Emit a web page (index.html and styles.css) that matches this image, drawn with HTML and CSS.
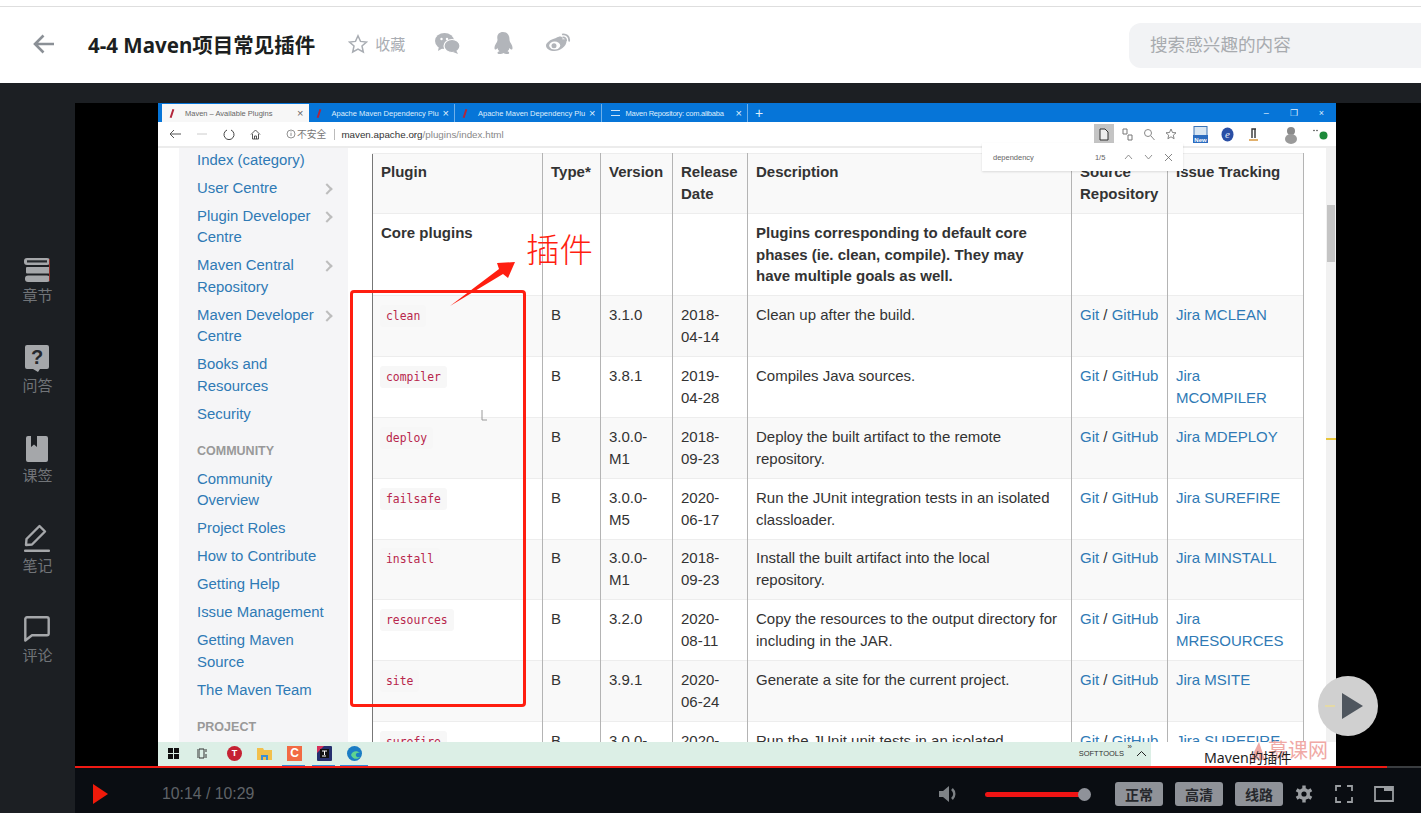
FILE: index.html
```html
<!DOCTYPE html>
<html lang="zh-CN">
<head>
    <meta charset="UTF-8">
    <meta name="viewport" content="width=device-width, initial-scale=1.0">
    <title>4-4 Maven项目常见插件</title>
    <link rel="stylesheet" href="styles.css">
</head>
<body>
    <header class="page-header">
        <div class="header-left">
            <svg class="back-icon" width="22" height="20" viewBox="0 0 22 20"><path d="M21 10H2M10.500 1.500L2 10l8.500 8.500" fill="none" stroke="#8b9096" stroke-width="2.600"/></svg>
            <h1 class="lesson-title">4-4 Maven项目常见插件</h1>
            <div class="collect">
                <svg width="20" height="20" viewBox="0 0 20 20"><path d="M10 1.800l2.500 5.600 6 .6-4.500 4 1.300 6L10 15l-5.300 3 1.300-6-4.500-4 6-.6z" fill="none" stroke="#a9adb3" stroke-width="1.500"/></svg>
                <span>收藏</span>
            </div>
            <div class="share-icons">
                <svg width="25" height="21" viewBox="0 0 25 21"><ellipse cx="9.500" cy="8" rx="9.500" ry="8" fill="#b2b5ba"/><path d="M4 13l-1 5 5-3z" fill="#b2b5ba"/><ellipse cx="17" cy="13" rx="8" ry="6.500" fill="#b2b5ba" stroke="#fff" stroke-width="1.200"/><path d="M21 17l2 4-5-2z" fill="#b2b5ba"/><circle cx="6.500" cy="6" r="1.200" fill="#fff"/><circle cx="12" cy="6" r="1.200" fill="#fff"/></svg>
                <svg width="20" height="23" viewBox="0 0 20 23"><path d="M10 0c4.500 0 6.500 3.500 6.500 7.500 0 1.500.5 2.500 1.500 4 1.500 2.500 2 5 1 6-.5.400-1.500-.3-2.500-1.500-.3 1.500-1 2.500-2 3.200 1.500.5 2 1.300 1.500 2.200-.8 1.200-4 .8-5.500-.4-1.500 1.200-5 1.600-5.800.4-.5-.9 0-1.700 1.800-2.200-1-.7-1.800-1.700-2-3.200-1 1.200-2 1.900-2.500 1.500-1-1 -.5-3.500 1-6 1-1.500 1.500-2.500 1.500-4C3.500 3.500 5.500 0 10 0z" fill="#b2b5ba"/></svg>
                <svg width="25" height="21" viewBox="0 0 25 21"><path d="M10 5c3-2 6-2 6.500 0 .2.800 0 1.500 0 1.500 2-.6 4-.3 4 1.700 0 5-6.500 9.800-12 9.800C4 18 0 16 0 12.500 0 10 4 6.500 10 5z" fill="#b2b5ba"/><ellipse cx="8.700" cy="12.500" rx="5.500" ry="4" fill="#fff"/><circle cx="8" cy="12.700" r="2.500" fill="#b2b5ba"/><path d="M16 1.500c4-1 8 2 7 7M16.500 4.500c2-.5 4 1 3.500 3.500" fill="none" stroke="#b2b5ba" stroke-width="1.800"/></svg>
            </div>
        </div>
        <div class="search-box">搜索感兴趣的内容</div>
    </header>

    <main class="player">
        <nav class="side-tools">
            <a class="tool-item">
                <svg width="26" height="24" viewBox="0 0 26 24"><rect x="0" y="0" width="26" height="7" rx="3" fill="#a5a7aa"/><rect x="3" y="2.300" width="20" height="2.200" fill="#25282c"/><rect x="2" y="9" width="24" height="6.500" rx="1" fill="#a5a7aa"/><rect x="1" y="17.500" width="25" height="6.500" rx="3" fill="#a5a7aa"/><path d="M25.500 1v22" stroke="#8e2b25" stroke-width="1"/></svg>
                <span>章节</span>
            </a>
            <a class="tool-item">
                <svg width="24" height="27" viewBox="0 0 24 27"><path d="M2 0h20a2 2 0 0 1 2 2v20a2 2 0 0 1-2 2h-7l-2 3-5-3H2a2 2 0 0 1-2-2V2a2 2 0 0 1 2-2z" fill="#a5a7aa"/><text x="12" y="19" class="tool-mark">?</text></svg>
                <span>问答</span>
            </a>
            <a class="tool-item">
                <svg width="22" height="26" viewBox="0 0 22 26"><path d="M2 0h3v11l3-2.500 3 2.500V0h9a2 2 0 0 1 2 2v22a2 2 0 0 1-2 2H2a2 2 0 0 1-2-2V2a2 2 0 0 1 2-2z" fill="#a5a7aa"/></svg>
                <span>课签</span>
            </a>
            <a class="tool-item">
                <svg width="26" height="28" viewBox="0 0 26 28"><path d="M2 21l.5-6L15.500 2l5.500 5.500L8 20.500z" fill="none" stroke="#a5a7aa" stroke-width="2.400" stroke-linejoin="round"/><rect x="0" y="25.500" width="26" height="2.500" rx="1" fill="#a5a7aa"/></svg>
                <span>笔记</span>
            </a>
            <a class="tool-item">
                <svg width="26" height="26" viewBox="0 0 26 26"><path d="M3 1.300h20a1.700 1.700 0 0 1 1.700 1.700v14.500a1.700 1.700 0 0 1-1.700 1.700H8l-6.700 5.300V3A1.700 1.700 0 0 1 3 1.300z" fill="none" stroke="#a5a7aa" stroke-width="2.400" stroke-linejoin="round"/></svg>
                <span>评论</span>
            </a>
        </nav>

        <section class="stage">
            <div class="video-area">
                <div class="shot">
                    <div class="tab-bar">
                        <div class="tab tab-active">
                            <i class="tab-logo"></i><span>Maven – Available Plugins</span><b>×</b>
                        </div>
                        <div class="tab">
                            <i class="tab-logo"></i><span>Apache Maven Dependency Plu</span><b>×</b>
                        </div>
                        <div class="tab">
                            <i class="tab-logo"></i><span>Apache Maven Dependency Plu</span><b>×</b>
                        </div>
                        <div class="tab">
                            <i class="tab-lines"></i><span class="tab-tight">Maven Repository: com.alibaba</span><b>×</b>
                        </div>
                        <div class="tab-plus">+</div>
                        <div class="win-buttons">
                            <span>–</span><span>❐</span><span>×</span>
                        </div>
                    </div>

                    <div class="url-bar">
                        <div class="nav-buttons">
                            <svg width="12" height="10" viewBox="0 0 12 10"><path d="M12 5H1M5 1L1 5l4 4" fill="none" stroke="#555" stroke-width="1"/></svg>
                            <svg width="12" height="10" viewBox="0 0 12 10"><path d="M1 5h10" stroke="#ccc" stroke-width="1"/></svg>
                            <svg width="12" height="12" viewBox="0 0 12 12"><path d="M4 2a5 5 0 1 0 4 0" fill="none" stroke="#444" stroke-width="1"/></svg>
                            <svg width="11" height="11" viewBox="0 0 11 11"><path d="M1 5.500L5.500 1 10 5.500M2.500 5v5h6V5M4.500 10V7h2v3" fill="none" stroke="#444" stroke-width=".9"/></svg>
                        </div>
                        <div class="address">
                            <svg width="10" height="10" viewBox="0 0 10 10"><circle cx="5" cy="5" r="4" fill="none" stroke="#777" stroke-width=".8"/><path d="M5 4v3M5 2.500v.8" stroke="#777" stroke-width=".8"/></svg>
                            <span class="not-safe">不安全</span>
                            <span class="url-text"><b>maven.apache.org</b>/plugins/index.html</span>
                        </div>
                        <div class="toolbar-icons">
                            <span class="reader-btn"><svg width="10" height="13" viewBox="0 0 10 13"><path d="M1 1h5l3 3v8H1z" fill="#eee" stroke="#333"/></svg></span>
                            <svg width="11" height="13" viewBox="0 0 11 13"><path d="M1 1h4v5H1zM6 7h4v5H6z" fill="none" stroke="#777"/></svg>
                            <svg width="12" height="13" viewBox="0 0 12 13"><circle cx="5" cy="5" r="3.500" fill="none" stroke="#888"/><path d="M8 8l3.500 4" stroke="#888"/></svg>
                            <svg width="12" height="12" viewBox="0 0 12 12"><path d="M6 1l1.500 3.500 3.500.3-2.700 2.400.8 3.500L6 8.800l-3.100 1.900.8-3.500L1 4.800l3.500-.3z" fill="none" stroke="#666" stroke-width=".8"/></svg>
                            <svg width="15" height="17" viewBox="0 0 15 17"><rect x="1" y=".5" width="13" height="9" fill="#d8e6f2" stroke="#3a74b8"/><rect x="0" y="9" width="15" height="8" fill="#2b6cc0"/><text x="7.500" y="15.500" class="news-mark">New</text></svg>
                            <svg width="13" height="15" viewBox="0 0 13 15"><ellipse cx="6.500" cy="7.500" rx="6" ry="7" fill="#2a4fa5"/><text x="6.500" y="11" class="edge-mark">e</text></svg>
                            <svg width="9" height="13" viewBox="0 0 9 13"><path d="M3 10V1h4M6 1v9" fill="none" stroke="#333" stroke-width="1.400"/><path d="M0 12h9" stroke="#d9973d" stroke-width="1.500"/></svg>
                            <svg width="12" height="19" viewBox="0 0 12 19"><circle cx="6" cy="6" r="4" fill="#8a8a8a"/><ellipse cx="6" cy="14" rx="6" ry="5" fill="#9a9a9a"/></svg>
                            <svg width="16" height="11" viewBox="0 0 16 11"><circle cx="2" cy="1.500" r=".8" fill="#444"/><circle cx="5" cy="1.500" r=".8" fill="#444"/><circle cx="11.500" cy="6.500" r="4" fill="#1c8a3a"/></svg>
                        </div>
                    </div>

                    <div class="site">
                        <div class="site-gutter"></div>
                        <ul class="site-nav">
                            <li><a>Index (category)</a></li>
                            <li class="has-sub"><a>User Centre</a></li>
                            <li class="has-sub"><a>Plugin Developer Centre</a></li>
                            <li class="has-sub"><a>Maven Central Repository</a></li>
                            <li class="has-sub"><a>Maven Developer Centre</a></li>
                            <li><a>Books and Resources</a></li>
                            <li><a>Security</a></li>
                            <li class="nav-head">COMMUNITY</li>
                            <li><a>Community Overview</a></li>
                            <li><a>Project Roles</a></li>
                            <li><a>How to Contribute</a></li>
                            <li><a>Getting Help</a></li>
                            <li><a>Issue Management</a></li>
                            <li><a>Getting Maven Source</a></li>
                            <li><a>The Maven Team</a></li>
                            <li class="nav-head">PROJECT</li>
                        </ul>
                        <div class="site-main">
                            <table class="plugin-table">
                                <colgroup>
                                    <col class="col-plugin"><col class="col-type"><col class="col-version"><col class="col-date"><col class="col-desc"><col class="col-source"><col class="col-issue">
                                </colgroup>
                                <tr class="row-head">
                                    <th>Plugin</th><th>Type*</th><th>Version</th><th>Release Date</th><th>Description</th><th>Source Repository</th><th>Issue Tracking</th>
                                </tr>
                                <tr class="row-core">
                                    <td><b>Core plugins</b></td><td></td><td></td><td></td>
                                    <td><b>Plugins corresponding to default core phases (ie. clean, compile). They may have multiple goals as well.</b></td><td></td><td></td>
                                </tr>
                                <tr class="row-alt">
                                    <td><code>clean</code></td><td>B</td><td>3.1.0</td><td>2018-04-14</td><td>Clean up after the build.</td><td><a>Git</a> / <a>GitHub</a></td><td><a>Jira MCLEAN</a></td>
                                </tr>
                                <tr>
                                    <td><code>compiler</code></td><td>B</td><td>3.8.1</td><td>2019-04-28</td><td>Compiles Java sources.</td><td><a>Git</a> / <a>GitHub</a></td><td><a>Jira MCOMPILER</a></td>
                                </tr>
                                <tr class="row-alt">
                                    <td><code>deploy</code></td><td>B</td><td>3.0.0-M1</td><td>2018-09-23</td><td>Deploy the built artifact to the remote repository.</td><td><a>Git</a> / <a>GitHub</a></td><td><a>Jira MDEPLOY</a></td>
                                </tr>
                                <tr>
                                    <td><code>failsafe</code></td><td>B</td><td>3.0.0-M5</td><td>2020-06-17</td><td>Run the JUnit integration tests in an isolated classloader.</td><td><a>Git</a> / <a>GitHub</a></td><td><a>Jira SUREFIRE</a></td>
                                </tr>
                                <tr class="row-alt row-short">
                                    <td><code>install</code></td><td>B</td><td>3.0.0-M1</td><td>2018-09-23</td><td>Install the built artifact into the local repository.</td><td><a>Git</a> / <a>GitHub</a></td><td><a>Jira MINSTALL</a></td>
                                </tr>
                                <tr>
                                    <td><code>resources</code></td><td>B</td><td>3.2.0</td><td>2020-08-11</td><td>Copy the resources to the output directory for including in the JAR.</td><td><a>Git</a> / <a>GitHub</a></td><td><a>Jira MRESOURCES</a></td>
                                </tr>
                                <tr class="row-alt">
                                    <td><code>site</code></td><td>B</td><td>3.9.1</td><td>2020-06-24</td><td>Generate a site for the current project.</td><td><a>Git</a> / <a>GitHub</a></td><td><a>Jira MSITE</a></td>
                                </tr>
                                <tr>
                                    <td><code>surefire</code></td><td>B</td><td>3.0.0-M5</td><td>2020-06-17</td><td>Run the JUnit unit tests in an isolated classloader.</td><td><a>Git</a> / <a>GitHub</a></td><td><a>Jira SUREFIRE</a></td>
                                </tr>
                            </table>
                        </div>
                        <div class="scroll-track"><i class="scroll-thumb"></i></div>
                    </div>

                    <div class="bottom-row">
                        <div class="taskbar">
                            <div class="task-icons">
                                <svg width="11" height="11" viewBox="0 0 11 11"><path d="M0 0h5v5H0zM6 0h5v5H6zM0 6h5v5H0zM6 6h5v5H6z" fill="#111"/></svg>
                                <svg width="11" height="11" viewBox="0 0 11 11"><path d="M2 1h5v9H2zM0 1v9M9 1v3M9 6v4" fill="none" stroke="#333"/></svg>
                                <span class="task-t">T</span>
                                <svg width="15" height="13" viewBox="0 0 15 13"><path d="M0 1h6l1 2h8v10H0z" fill="#f2c04c"/><path d="M4 8h7v5H9v-3H6v3H4z" fill="#3d8fd6"/></svg>
                                <span class="task-c">C</span>
                                <svg width="15" height="15" viewBox="0 0 15 15"><rect width="15" height="15" rx="1" fill="#26306e"/><path d="M0 0h7L0 7z" fill="#d8315b"/><path d="M3 3h9v9H3z" fill="#111"/><path d="M5 5h5M7.500 5v4M5 10h4" stroke="#fff"/></svg>
                                <svg width="15" height="15" viewBox="0 0 15 15"><circle cx="7.500" cy="7.500" r="7.500" fill="#1b7dc4"/><path d="M4 9c1-4 6-5 9-2-2-1-5 0-4 3 1 1.500 3 1.500 4 .8-2 3-7 3-9-1.800z" fill="#5fd38f"/></svg>
                            </div>
                            <div class="task-tray">
                                <span>SOFTTOOLS</span>
                                <i class="tray-more">»</i>
                                <svg width="11" height="7" viewBox="0 0 11 7"><path d="M1 6l4.500-4.500L10 6" fill="none" stroke="#222" stroke-width="1"/></svg>
                            </div>
                        </div>
                        <div class="caption">Maven的插件</div>
                    </div>

                    <!-- things drawn over the recording -->
                    <div class="find-bar">
                        <span class="find-word">dependency</span>
                        <span class="find-count">1/5</span>
                        <span class="find-btns">
                            <svg width="9" height="6" viewBox="0 0 9 6"><path d="M1 5l3.500-4L8 5" fill="none" stroke="#777" stroke-width=".8"/></svg>
                            <svg width="9" height="6" viewBox="0 0 9 6"><path d="M1 1l3.500 4L8 1" fill="none" stroke="#777" stroke-width=".8"/></svg>
                            <svg width="9" height="9" viewBox="0 0 9 9"><path d="M1 1l7 7M8 1L1 8" stroke="#666" stroke-width=".8"/></svg>
                        </span>
                    </div>
                    <div class="red-box"></div>
                    <svg class="red-arrow" width="70" height="48" viewBox="0 0 70 48"><path d="M1 46L50 9 48 3 66 2 59 18 54 14z" fill="#ff1e10"/></svg>
                    <div class="red-label">插件</div>
                    <svg class="mouse-mark" width="8" height="13" viewBox="0 0 8 13"><path d="M1 1v10h5" fill="none" stroke="#9a9a9a" stroke-width="1"/></svg>
                    <div class="watermark">
                        <svg width="15" height="18" viewBox="0 0 15 18"><path d="M9 0l6 18H8l1-6-3 6H0z" fill="#f0a9a5"/></svg>
                        <span>慕课网</span>
                    </div>
                </div>
                <div class="big-play"><i></i></div>
            </div>

            <div class="progress"><i></i></div>

            <div class="controls">
                <i class="play-btn"></i>
                <span class="time">10:14 / 10:29</span>
                <svg class="volume-icon" width="19" height="18" viewBox="0 0 19 18"><path d="M0 6h4l6-5v16l-6-5H0z" fill="#7e8286"/><path d="M13 4c3 3 3 7 0 10" fill="none" stroke="#7e8286" stroke-width="2.500"/></svg>
                <div class="volume-bar"><i></i></div>
                <div class="ctrl-btn">正常</div>
                <div class="ctrl-btn">高清</div>
                <div class="ctrl-btn">线路</div>
                <svg class="gear-icon" width="18" height="18" viewBox="0 0 18 18"><path d="M9 .5v17M1.600 4.750l14.800 8.500M1.600 13.250l14.800-8.500" stroke="#9a9da1" stroke-width="3.400"/><circle cx="9" cy="9" r="6" fill="#9a9da1"/><circle cx="9" cy="9" r="2.600" fill="#0a0d12"/></svg>
                <svg class="full-icon" width="18" height="18" viewBox="0 0 18 18"><path d="M1 6V1h5M12 1h5v5M17 12v5h-5M6 17H1v-5" fill="none" stroke="#9a9da1" stroke-width="1.800"/></svg>
                <svg class="pip-icon" width="20" height="16" viewBox="0 0 20 16"><path d="M1 1h18v14H1z" fill="none" stroke="#9a9da1" stroke-width="1.800"/><path d="M10 1h9v4h-9z" fill="#9a9da1"/></svg>
            </div>
        </section>
    </main>
</body>
</html>
```

FILE: styles.css
```css
* {
    box-sizing: border-box;
}

body {
    margin: 0;
    height: 813px;
    overflow: hidden;
    background-color: #fff;
    font-family: "Liberation Sans", "Noto Sans CJK SC", sans-serif;
}

/* top header */
.page-header {
    height: 83px;
    display: flex;
    justify-content: space-between;
    align-items: center;
    padding: 7px 0 0 33px;
    background: linear-gradient(#fff 6px, #dedede 6px, #dedede 7px, #fff 7px);
}

.header-left {
    display: flex;
    align-items: center;
    margin-top: -3px;
}

.back-icon {
    display: block;
}

.lesson-title {
    margin: 0 0 0 33px;
    font-family: "Noto Sans", "Noto Sans CJK SC", sans-serif;
    font-size: 20.500px;
    font-weight: bold;
    color: #1c1f21;
}

.collect {
    display: flex;
    align-items: center;
    margin-left: 33px;
    gap: 7px;
    font-size: 15px;
    font-family: "Noto Sans CJK SC", sans-serif;
    color: #a9adb3;
}

.share-icons {
    display: flex;
    align-items: center;
    margin-left: 30px;
    gap: 33px;
}

.search-box {
    width: 292px;
    height: 45px;
    padding-left: 21px;
    line-height: 42px;
    background-color: #f2f3f5;
    border-radius: 12px 0 0 12px;
    font-family: "Noto Sans CJK SC", sans-serif;
    font-size: 17.600px;
    color: #a8abaf;
}

/* player */
.player {
    height: 730px;
    display: flex;
    background-color: #1c1f23;
}

.side-tools {
    width: 75px;
    flex-shrink: 0;
    padding-top: 161px;
    display: flex;
    flex-direction: column;
    align-items: center;
    gap: 29px;
}

.tool-item {
    height: 61px;
    display: flex;
    flex-direction: column;
    align-items: center;
    justify-content: flex-end;
    gap: 3px;
    font-family: "Noto Sans CJK SC", sans-serif;
    font-size: 15px;
    line-height: 20px;
    color: #717478;
}

.tool-mark {
    font-family: "Liberation Sans", sans-serif;
    font-size: 20px;
    font-weight: bold;
    text-anchor: middle;
    fill: #25282c;
}

.stage {
    flex: 1;
    display: flex;
    flex-direction: column;
}

.video-area {
    position: relative;
    height: 683px;
    padding: 20px 85px 0 83px;
    background: linear-gradient(#1c1f23 20px, #000 20px);
}

.shot {
    position: relative;
    height: 100%;
    display: flex;
    flex-direction: column;
    overflow: hidden;
    background-color: #fff;
}

/* recorded browser */
.tab-bar {
    height: 19px;
    flex-shrink: 0;
    display: flex;
    align-items: flex-end;
    padding-left: 4px;
    background-color: #0675d8;
    color: #dfeefc;
    font-size: 7.500px;
}

.tab {
    width: 146.500px;
    height: 18px;
    display: flex;
    align-items: center;
    padding: 0 5px 0 9px;
    border-right: 1px solid #6fb0ea;
    white-space: nowrap;
}

.tab b {
    margin-left: auto;
    font-weight: normal;
    font-size: 11px;
}

.tab-active {
    background-color: #f7f7f7;
    color: #666;
    border-right: 0;
}

.tab-logo {
    width: 2px;
    height: 9px;
    margin-right: 12px;
    background-color: #b3263b;
    transform: rotate(18deg);
}

.tab-lines {
    width: 9px;
    height: 6px;
    margin-right: 6px;
    border-top: 1px solid #cfe4f8;
    border-bottom: 1px solid #cfe4f8;
}

.tab-tight {
    letter-spacing: -.24px;
}

.tab-plus {
    margin: 0 0 1px 7px;
    font-size: 14px;
    line-height: 16px;
    color: #dfeefc;
}

.win-buttons {
    display: flex;
    margin-left: auto;
    margin-right: 12px;
    gap: 21px;
    height: 18px;
    align-items: center;
    font-size: 9px;
}

.url-bar {
    height: 26px;
    flex-shrink: 0;
    display: flex;
    align-items: center;
    padding: 0 8px 0 11px;
    background-color: #fff;
    border-bottom: 2px solid #ececec;
}

.nav-buttons {
    display: flex;
    align-items: center;
    gap: 15px;
}

.address {
    display: flex;
    align-items: center;
    margin-left: 25px;
    font-size: 9.800px;
    color: #888;
}

.not-safe {
    margin-left: 1px;
    padding-right: 8px;
    border-right: 1px solid #bbb;
    font-family: "Noto Sans CJK SC", sans-serif;
    font-size: 9.800px;
    line-height: 11px;
    color: #777;
}

.url-text {
    margin-left: 6px;
}

.url-text b {
    font-weight: normal;
    color: #333;
}

.toolbar-icons {
    display: flex;
    align-items: center;
    margin-left: auto;
    gap: 10px;
}

.toolbar-icons > :nth-child(2) { margin-left: -2.500px; }
.toolbar-icons > :nth-child(3) { margin-left: .5px; }
.toolbar-icons > :nth-child(5) { margin-left: 5.500px; }
.toolbar-icons > :nth-child(6) { margin-left: 3px; }
.toolbar-icons > :nth-child(7) { margin-left: 5px; }
.toolbar-icons > :nth-child(8) { margin-left: 17.500px; }
.toolbar-icons > :nth-child(9) { margin-left: 5px; }

.reader-btn {
    width: 20px;
    height: 20px;
    display: flex;
    align-items: center;
    justify-content: center;
    background-color: #c4c4c4;
}

.news-mark {
    font-size: 6px;
    font-weight: bold;
    text-anchor: middle;
    fill: #fff;
}

.edge-mark {
    font-family: "Liberation Serif", serif;
    font-size: 11px;
    font-style: italic;
    text-anchor: middle;
    fill: #e6ecf8;
}

.site {
    flex: 1;
    min-height: 0;
    display: grid;
    grid-template-columns: 21px 169px 1fr 10px;
    overflow: hidden;
    background-color: #fff;
}

.site-gutter {
    background-color: #fff;
}

.site-nav {
    margin: 0;
    padding: 1.700px 14px 0 18px;
    list-style: none;
    background-color: #f5f5f7;
    font-size: 14.900px;
    line-height: 21.500px;
    color: #2f7ab5;
}

.site-nav li {
    position: relative;
    margin-bottom: 6.500px;
}

.has-sub::after {
    content: "";
    position: absolute;
    top: 7px;
    right: 3px;
    width: 6px;
    height: 6px;
    border-top: 2.500px solid #bdbdbd;
    border-right: 2.500px solid #bdbdbd;
    transform: rotate(45deg);
}

.has-sub a {
    display: block;
    width: 125px;
}

.site-nav .nav-head {
    margin-top: 16px;
    margin-bottom: 6px;
    font-size: 12.500px;
    font-weight: bold;
    color: #999;
}

.site-main {
    padding: 5px 0 0 24px;
    overflow: hidden;
}

.plugin-table {
    width: 931px;
    table-layout: fixed;
    border-collapse: collapse;
    font-size: 15px;
    line-height: 21.500px;
    color: #333;
}

.col-plugin { width: 170px; }
.col-type { width: 58px; }
.col-version { width: 72px; }
.col-date { width: 75px; }
.col-desc { width: 324px; }
.col-source { width: 96px; }
.col-issue { width: 136px; }

.plugin-table th,
.plugin-table td {
    height: 61px;
    padding: 8px;
    vertical-align: top;
    text-align: left;
    border-left: 1px solid #b4b4b4;
    border-right: 1px solid #b4b4b4;
    border-top: 1px solid #ededed;
}

/* these two columns wrap a little sooner than the others */
.plugin-table td:nth-child(5),
.plugin-table td:nth-child(7) {
    padding-right: 12px;
}

.plugin-table th:first-child,
.plugin-table td:first-child {
    border-left-color: #777;
}

.plugin-table th {
    height: 60px;
    padding-top: 7px;
}

.plugin-table tr.row-core td {
    height: 82px;
}

.plugin-table tr.row-short td {
    height: 60px;
    padding-top: 7px;
}

.row-head,
.row-alt {
    background-color: #f9f9f9;
}

.plugin-table a {
    color: #2f7ab5;
}

.plugin-table code {
    display: inline-block;
    margin-left: -1px;
    padding: 0 6px;
    border-radius: 3px;
    background-color: #f7f7f7;
    font-family: "DejaVu Sans Mono", monospace;
    font-size: 11.400px;
    line-height: 22px;
    color: #b8264c;
}

.scroll-track {
    position: relative;
    background-color: #f1f1f1;
}

.scroll-track::after {
    content: "";
    position: absolute;
    top: 290px;
    left: 0;
    right: 0;
    height: 2px;
    background-color: #e8c53a;
}

.scroll-thumb {
    display: block;
    margin: 57px 1px 0;
    height: 57px;
    background-color: #c4c4c4;
}

.bottom-row {
    height: 24px;
    flex-shrink: 0;
    display: flex;
}

.taskbar {
    width: 993px;
    display: flex;
    align-items: center;
    justify-content: space-between;
    padding: 0 4px 1px 10px;
    background-color: #dcefe6;
    background-image: linear-gradient(#2f8ad8, #2f8ad8), linear-gradient(#2f8ad8, #2f8ad8), linear-gradient(#2f8ad8, #2f8ad8);
    background-size: 23px 1px, 23px 1px, 28px 1px;
    background-position: 124px 100%, 154px 100%, 182px 100%;
    background-repeat: no-repeat;
}

.task-icons {
    display: flex;
    align-items: center;
    gap: 15px;
}

.task-icons svg:nth-child(2) {
    margin-left: 3px;
}

.task-t {
    width: 15px;
    height: 15px;
    margin-left: 4px;
    border-radius: 50%;
    background-color: #c52233;
    color: #fff;
    font-size: 9px;
    font-weight: bold;
    line-height: 15px;
    text-align: center;
}

.task-c {
    width: 15px;
    height: 15px;
    background-color: #f26b43;
    color: #fff;
    font-size: 12px;
    font-weight: bold;
    line-height: 15px;
    text-align: center;
}

.task-tray {
    position: relative;
    display: flex;
    align-items: center;
    gap: 12px;
    font-size: 7.500px;
    color: #333;
}

.tray-more {
    position: absolute;
    top: -6px;
    right: 15px;
    font-style: normal;
    font-size: 8px;
    line-height: 8px;
}

.caption {
    position: relative;
    z-index: 1;
    flex: 1;
    padding-left: 53px;
    font-family: "Noto Sans", "Noto Sans CJK SC", sans-serif;
    font-size: 14.200px;
    line-height: 32px;
    color: #1d1d1d;
}

.find-bar {
    position: absolute;
    top: 40px;
    left: 824px;
    width: 201px;
    height: 28px;
    display: flex;
    align-items: center;
    padding: 0 11px;
    background-color: #fff;
    box-shadow: 0 1px 2px rgba(0, 0, 0, .12);
    font-size: 7.500px;
    color: #666;
}

.find-count {
    margin-left: 61px;
}

.find-btns {
    display: flex;
    align-items: center;
    gap: 11px;
    margin-left: 19px;
}

.red-box {
    position: absolute;
    top: 187px;
    left: 192px;
    width: 176px;
    height: 417px;
    border: 3px solid #ff1e10;
    border-radius: 4px;
}

.red-arrow {
    position: absolute;
    top: 157px;
    left: 291px;
}

.red-label {
    position: absolute;
    top: 121px;
    left: 368px;
    font-family: "Noto Sans CJK SC", sans-serif;
    font-size: 33.500px;
    line-height: 48px;
    font-weight: 300;
    color: #ff1e10;
}

.mouse-mark {
    position: absolute;
    top: 306px;
    left: 323px;
}

.watermark {
    position: absolute;
    right: 8px;
    bottom: 6px;
    display: flex;
    align-items: flex-end;
    gap: 3px;
    font-family: "Noto Sans CJK SC", sans-serif;
    font-size: 20px;
    line-height: 20px;
    color: #f0a9a5;
}

.big-play {
    position: absolute;
    top: 593px;
    left: 1243px;
    width: 60px;
    height: 60px;
    display: flex;
    align-items: center;
    justify-content: center;
    padding-left: 8px;
    border-radius: 50%;
    background-color: #d0d0d0;
}

.big-play::before {
    content: "";
    position: absolute;
    top: 29px;
    left: 7px;
    width: 10px;
    height: 2px;
    background-color: #e4d9a6;
}

.big-play i {
    width: 0;
    height: 0;
    border-left: 21px solid #4f565e;
    border-top: 13px solid transparent;
    border-bottom: 13px solid transparent;
}

.progress {
    height: 2px;
    background-color: #3a3d40;
}

.progress i {
    display: block;
    width: 1312px;
    height: 2px;
    background-color: #f01a14;
}

.controls {
    height: 45px;
    display: flex;
    align-items: center;
    padding: 7px 0 0 18px;
    background-color: #0a0d12;
}

.play-btn {
    width: 0;
    height: 0;
    border-left: 15px solid #f01a0a;
    border-top: 10px solid transparent;
    border-bottom: 10px solid transparent;
}

.time {
    width: 92px;
    margin-left: 54px;
    font-size: 15.800px;
    white-space: nowrap;
    color: #5f6368;
}

.volume-icon {
    margin-left: 685px;
}

.volume-bar {
    position: relative;
    width: 100px;
    height: 5px;
    margin-left: 27px;
    border-radius: 3px;
    background-color: #f01414;
}

.volume-bar i {
    position: absolute;
    top: -4px;
    right: -6px;
    width: 13px;
    height: 13px;
    border-radius: 50%;
    background-color: #8f9299;
}

.ctrl-btn {
    width: 48px;
    height: 24px;
    margin-left: 12px;
    border-radius: 3px;
    background-color: #8f9298;
    font-family: "Noto Sans CJK SC", sans-serif;
    font-size: 14px;
    font-weight: bold;
    line-height: 24px;
    text-align: center;
    color: #26282c;
}

.volume-bar + .ctrl-btn {
    margin-left: 30px;
}

.gear-icon {
    margin-left: 12px;
}

.full-icon {
    margin-left: 22px;
}

.pip-icon {
    margin-left: 21px;
}
```
